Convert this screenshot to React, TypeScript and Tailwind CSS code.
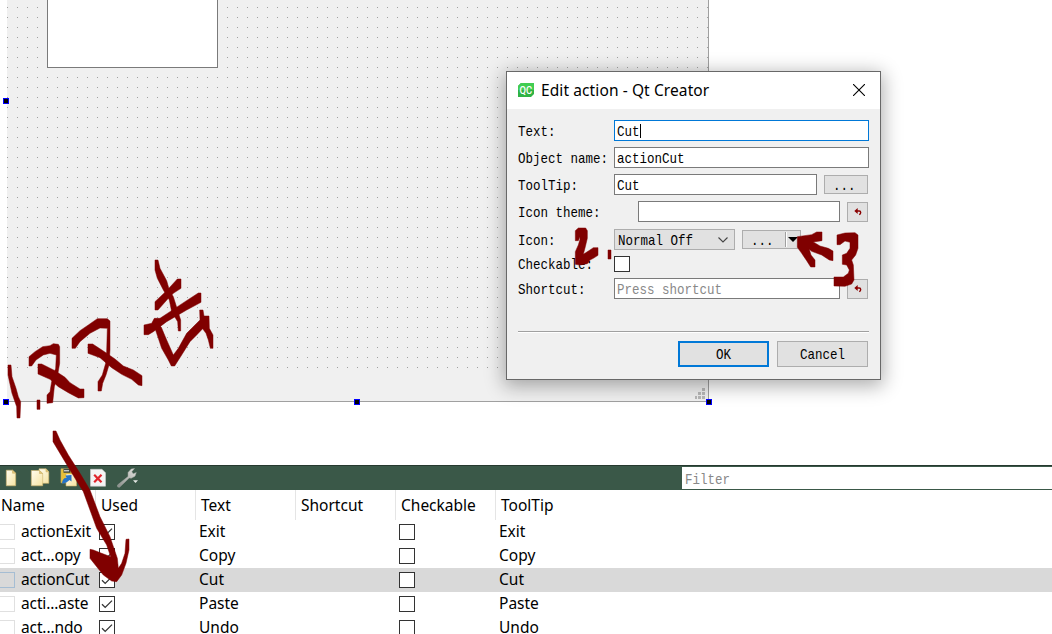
import type { ReactNode } from "react";

// ── Types ──────────────────────────────────────────────────────────

interface ActionRow {
  name: string;
  text: string;
  selected?: boolean;
}

// ── Data ───────────────────────────────────────────────────────────

const actions: ActionRow[] = [
  { name: "actionExit", text: "Exit" },
  { name: "act...opy", text: "Copy" },
  { name: "actionCut", text: "Cut", selected: true },
  { name: "acti...aste", text: "Paste" },
  { name: "act...ndo", text: "Undo" },
];

const columns = ["Used", "Text", "Shortcut", "Checkable"];

// ── Small pieces ───────────────────────────────────────────────────

function Mono({ children, className = "" }: { children: ReactNode; className?: string }) {
  return (
    <span
      className={`inline-block translate-y-px whitespace-pre font-['Liberation_Mono',monospace] text-[12.5px] leading-4 scale-y-[1.2] ${className}`}
    >
      {children}
    </span>
  );
}

function Handle({ className }: { className: string }) {
  return <div className={`absolute size-1.5 border border-[#0000ff] bg-black ${className}`} />;
}

function CheckBox({ checked = false }: { checked?: boolean }) {
  return (
    <div className="size-4 shrink-0 border border-[#333] bg-white">
      {checked && (
        <svg viewBox="0 0 14 14" className="size-3.5" fill="none" stroke="#333" strokeWidth="1.3">
          <path d="M2 7.2 5.2 10.4 12 3.6" />
        </svg>
      )}
    </div>
  );
}

function Field({ children, className = "" }: { children?: ReactNode; className?: string }) {
  return (
    <div className={`flex h-[21px] items-center border bg-white pl-0.5 ${className}`}>{children}</div>
  );
}

function ResetButton() {
  return (
    <button className="flex h-5 w-[21px] items-center justify-center border border-[#adadad] bg-[#e1e1e1]">
      <svg viewBox="0 0 8 8" className="size-2">
        <path d="M0.3 3 3.7 0V6Z" fill="#8b0000" />
        <path d="M3 3H5.2Q6.7 3 6.7 4.5T5.2 6.7" fill="none" stroke="#8b0000" strokeWidth="1.4" />
      </svg>
    </button>
  );
}

function FormRow({ label, children, className }: { label: string; children: ReactNode; className: string }) {
  return (
    <div className={`flex items-center ${className}`}>
      <div className="flex w-24 shrink-0">
        <Mono>{label}</Mono>
      </div>
      {children}
    </div>
  );
}

// ── Form editor ────────────────────────────────────────────────────

function FormCanvas() {
  return (
    <div className="relative h-[465px] pl-[7px]">
      <div className="relative flex h-[402px] w-[702px] flex-col border-r border-b border-[#a0a0a0] bg-[#f0f0f0]">
        <svg className="h-[370px] w-full">
          <defs>
            <pattern id="grid" width="10" height="10" patternUnits="userSpaceOnUse">
              <rect x="0" y="7" width="1" height="1" fill="#a0a0a0" />
            </pattern>
          </defs>
          <rect width="702" height="370" fill="url(#grid)" />
        </svg>
        <div className="absolute top-0 left-10 h-[68px] w-[171px] border border-t-0 border-[#7a7a7a] bg-white" />
        <svg viewBox="0 0 10 11" className="mt-auto mr-[3px] mb-0.5 h-[11px] w-2.5 self-end" fill="#b8b8b8">
          <path d="M7 0h3v3h-3zM3 4h3v3h-3zM7 4h3v3h-3zM0 8h2v3h-2zM3 8h3v3h-3zM7 8h3v3h-3z" />
        </svg>
      </div>
      <Handle className="top-[98px] left-[3px]" />
      <Handle className="top-[399px] left-[3px]" />
      <Handle className="top-[399px] left-[354px]" />
      <Handle className="top-[399px] left-[706px]" />
    </div>
  );
}

// ── Action editor ──────────────────────────────────────────────────

function Toolbar() {
  return (
    <div className="flex h-[25px] items-center border-t border-[#26392f] bg-[#3a5848]">
      <svg width="140" height="24" viewBox="0 0 140 24">
        <defs>
          <linearGradient id="paper" x1="0" y1="0" x2="1" y2="1">
            <stop offset="0" stopColor="#fffdf0" />
            <stop offset="1" stopColor="#f6e3a0" />
          </linearGradient>
          <linearGradient id="steel" x1="0" y1="1" x2="1" y2="0">
            <stop offset="0" stopColor="#858a86" />
            <stop offset="1" stopColor="#e8e8e4" />
          </linearGradient>
        </defs>
        <g fill="url(#paper)" stroke="#cdb26a" strokeWidth="0.6">
          <path d="M6.3 4.2h6.2l3.2 3v12.6H6.3z" />
          <path d="M12.5 4.2v3h3.2z" fill="#e3c878" />
          <path d="M39 2.8h7l2.8 3v11.5H39z" />
          <path d="M46 2.8v3h2.8z" fill="#e3c878" />
          <path d="M31.3 4.5h8.2l3.2 3v12.3H31.3z" />
          <path d="M39.5 4.5v3h3.2z" fill="#e3c878" />
          <path d="M61 2.8h11v14H61z" fill="#e9bf37" />
          <path d="M66 8h8l2.5 2.5v9.5H66z" />
        </g>
        <path d="M63.5 2.8h7v4h-7z" fill="#404840" />
        <path d="M64 4.8h5" stroke="#fff" />
        <path d="M62 17.5Q62.5 11.5 66.5 12L65.5 9.5 71.5 9V15.5L69.5 14Q66 17.5 62 17.5Z" fill="#2674c8" />
        <path d="M90.5 3.3H102l3.5 3.5v13.4H90.5z" fill="#f4f4f4" stroke="#ccc" strokeWidth="0.6" />
        <path d="m94.2 8.8 7.3 7.5M101.5 8.8l-7.3 7.5" stroke="#e0242b" strokeWidth="2.2" />
        <path
          d="M117.5 19 128 10.5 128 6.5 131.2 3 134.5 2.5 131.8 5.7 133.2 7.8 136.3 6.5 135 10.2 131.3 12.2 129.2 12 119.6 21.2Q117 22 117.5 19Z"
          fill="url(#steel)"
          stroke="#9da39e"
          strokeWidth="0.5"
        />
        <path d="M133 14.2h5l-2.5 2.7z" fill="#e4e8e5" />
      </svg>
      <div className="ml-auto flex h-[22px] w-[370px] items-center bg-white pt-0.5 pl-[3px]">
        <Mono className="text-[#888]">Filter</Mono>
      </div>
    </div>
  );
}

function ActionTable() {
  return (
    <div className="h-36 overflow-hidden bg-white">
      <div className="flex h-[30px] items-center">
        <div className="w-[95px] pl-px">Name</div>
        {columns.map((c) => (
          <div key={c} className="flex h-full w-[100px] items-center border-l border-[#e5e5e5] pl-[5px]">
            {c}
          </div>
        ))}
        <div className="flex h-full flex-1 items-center border-l border-[#e5e5e5] pl-[5px]">ToolTip</div>
      </div>
      {actions.map((a) => (
        <div key={a.name} className={`flex h-6 items-center leading-[22px] ${a.selected ? "bg-[#d9d9d9]" : ""}`}>
          <div
            className={`h-4 w-[15px] border border-l-0 ${a.selected ? "border-[#a5bdd3]" : "border-[#e0e0e0]"}`}
          />
          <div className="w-[84px] pb-0.5 pl-1.5 tracking-[-0.12px] whitespace-nowrap">{a.name}</div>
          <CheckBox checked />
          <div className="w-[284px] pb-0.5 pl-[84px]">{a.text}</div>
          <CheckBox />
          <div className="pb-0.5 pl-[84px]">{a.text}</div>
        </div>
      ))}
    </div>
  );
}

// ── Dialog ─────────────────────────────────────────────────────────

function EditActionDialog() {
  return (
    <div className="absolute top-[71px] left-[506px] flex h-[309px] w-[375px] flex-col border border-[#686868] bg-[#f0f0f0] shadow-[0_4px_18px_2px_rgba(0,0,0,0.32)]">
      <div className="flex h-[37px] items-center bg-white pr-[15px] pb-px pl-[11px]">
        <svg width="16" height="14" viewBox="0 0 16 14">
          <path d="M3 0H16V11L13 14H0V3Z" fill="#2fb344" />
          <path d="M3 0H16V7H0V3Z" fill="#41cd52" />
          <text x="1.6" y="10.8" fontFamily="Roboto" fontSize="10.5" fontWeight="500" textLength="12.6" lengthAdjust="spacingAndGlyphs" fill="#fff">
            QC
          </text>
        </svg>
        <span className="ml-[7px] pb-px tracking-[0.1px]">Edit action - Qt Creator</span>
        <svg className="ml-auto" width="12" height="12" viewBox="0 0 12 12" stroke="#000" strokeWidth="1.1">
          <path d="M0 0 12 12M12 0 0 12" />
        </svg>
      </div>

      <div className="flex flex-1 flex-col pt-[11px] pr-[11px] pl-[11px]">
        <FormRow label="Text:" className="h-[21px]">
          <Field className="w-[255px] border-[#0078d7]">
            <Mono>Cut</Mono>
            <div className="h-3.5 w-px bg-black" />
          </Field>
        </FormRow>
        <FormRow label="Object name:" className="mt-1.5 h-[21px]">
          <Field className="w-[255px] border-[#7a7a7a]">
            <Mono>actionCut</Mono>
          </Field>
        </FormRow>
        <FormRow label="ToolTip:" className="mt-1.5 h-[21px]">
          <Field className="w-[203px] border-[#7a7a7a]">
            <Mono>Cut</Mono>
          </Field>
          <button className="ml-[7px] flex h-[19px] w-11 items-center border border-[#adadad] bg-[#e1e1e1] pl-2">
            <Mono>...</Mono>
          </button>
        </FormRow>
        <FormRow label="Icon theme:" className="mt-1.5 h-[21px]">
          <Field className="ml-6 w-[202px] border-[#7a7a7a]" />
          <div className="ml-[7px]">
            <ResetButton />
          </div>
        </FormRow>
        <FormRow label="Icon:" className="mt-[7px] h-[21px]">
          <div className="flex h-[21px] w-[121px] items-center border border-[#adadad] bg-[#e1e1e1] pr-1.5 pl-[3px]">
            <Mono>Normal Off</Mono>
            <svg className="ml-auto" width="10" height="6" viewBox="0 0 10 6" fill="none" stroke="#444" strokeWidth="1.1">
              <path d="M.5.5 5 5 9.5.5" />
            </svg>
          </div>
          <button className="ml-[7px] flex h-[19px] w-[59px] items-center border border-[#adadad] bg-[#e1e1e1] pl-2">
            <Mono>...</Mono>
            <div className="ml-[11px] h-[15px] w-0.5 border-r border-l border-r-white border-l-[#a0a0a0]" />
            <svg className="ml-px" width="10" height="5" viewBox="0 0 10 5">
              <path d="M0 0H10L5 5Z" />
            </svg>
          </button>
        </FormRow>
        <FormRow label="Checkable:" className="mt-1.5 h-4">
          <CheckBox />
        </FormRow>
        <FormRow label="Shortcut:" className="mt-1.5 h-[21px]">
          <Field className="w-[226px] border-[#7a7a7a]">
            <Mono className="text-[#888]">Press shortcut</Mono>
          </Field>
          <div className="ml-[7px]">
            <ResetButton />
          </div>
        </FormRow>

        <div className="mt-8 h-0.5 border-t border-b border-t-[#a0a0a0] border-b-white" />
        <div className="mt-2 flex justify-end gap-2 pr-px">
          <button className="flex h-[26px] w-[91px] items-center justify-center border-2 border-[#0078d7] bg-[#e1e1e1]">
            <Mono>OK</Mono>
          </button>
          <button className="flex h-[26px] w-[91px] items-center justify-center border border-[#adadad] bg-[#e1e1e1]">
            <Mono>Cancel</Mono>
          </button>
        </div>
      </div>
    </div>
  );
}

// ── Hand-drawn notes ───────────────────────────────────────────────

function PenNotes() {
  return (
    <svg
      className="pointer-events-none absolute inset-0"
      width="1052"
      height="634"
      viewBox="0 0 1052 634"
      fill="#800000"
      stroke="#800000"
      strokeWidth="1.5"
    >
      {/* step 1: double click */}
      <g transform="translate(0 240) scale(0.33333)">
        <path d="M24 375H33L36 410 48 445 55 470 62 485 60 534H51L50 500 36 460 24 405Z" />
        <path d="M111 480h9v28h-9z" />
        <path d="M87 350 105 335 128 320 150 317 160 311 175 313 179 320V370L172 410 163 440 158 488 141 490V465L150 455 155 425 167 385 169 345 150 340 130 345 108 360 95 378H87Z" />
        <path d="M114 372H125L165 392 195 412 210 428 240 447H252V473L235 474 205 458 175 440 150 418 114 402Z" />
        <path d="M216 295 240 272 265 255 292 236H322L330 243V330L327 375 318 405 308 430 304 453H294V425L307 405 317 370 320 335 322 265 300 264 270 280 240 305 226 325H216Z" />
        <path d="M264 312H278L310 333 345 357 370 378 400 390 426 407V437L415 435 395 418 365 403 335 383 300 353 264 340Z" />
        <path d="M465 60H474L480 85 500 122 508 150 520 170 531 205 542 240V273H535L533 245 515 215 508 180 490 150 472 115 465 90Z" />
        <path d="M465 185 500 152 532 117H543V145L520 160 505 175 474 210H465Z" />
        <path d="M432 255 455 250 463 235H480L510 215 555 185 595 159H603V187L560 210 500 245 460 275 445 284H432Z" />
        <path d="M463 240 484 262 500 300 520 345 535 325 560 280 600 240 599 210H609L612 228H627L628 265 639 285V325H631L625 300 618 280 608 266 590 285 570 305 545 345 524 378H514L505 360 485 325 465 265Z" />
      </g>
      <g transform="translate(0 420) scale(0.33333)">
        <path d="M159 33H168L180 60 205 105 240 160 270 210 300 290 330 350 352 415 355 445 365 430 375 400 378 358 387 357V390L378 430 365 465 350 485 335 483 310 465 290 440 270 415V388L280 390 305 400 332 410 320 375 290 325 270 270 250 215 225 175 195 125 159 65Z" />
      </g>
      {/* step 2 */}
      <g transform="translate(500 210) scale(0.33333)">
        <path d="M226 62 235 54H257L262 62V85L256 110 250 133 270 120 280 113H294V136L280 145 270 150 262 161 240 165 226 163V125L235 105 240 88V80L235 92H226Z" />
        <path d="M324 120h9v27h-9z" />
      </g>
      {/* step 3 */}
      <g transform="translate(690 210) scale(0.33333)">
        <path d="M322 80 365 74 380 66H396V92L370 96 390 108 415 115 429 123V152L418 150 395 135 365 124 358 118 363 135 375 150V171H362L350 152 335 130 322 112Z" />
        <path d="M441 75 465 69 495 68 504 75V115L497 135 485 150 490 165 492 210 485 222 465 229 432 228V201H460L475 190 478 180 470 165 457 163V135L470 130 480 115V97L465 93 450 104H441Z" />
      </g>
    </svg>
  );
}

export default function App() {
  return (
    <div className="relative h-[634px] w-[1052px] overflow-hidden bg-white font-['Noto_Sans',sans-serif] text-[15.5px] leading-6 text-black">
      <FormCanvas />
      <Toolbar />
      <ActionTable />
      <EditActionDialog />
      <PenNotes />
    </div>
  );
}
